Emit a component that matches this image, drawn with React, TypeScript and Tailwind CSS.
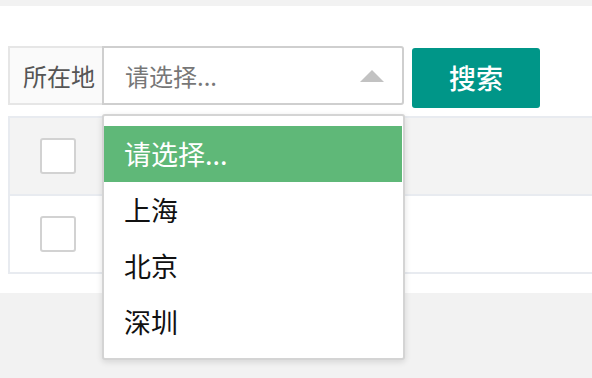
import React from "react";

const font = { fontFamily: '"Noto Sans CJK SC", "Noto Sans", sans-serif' };

export default function App() {
  const options = ["请选择...", "上海", "北京", "深圳"];
  return (
    <div className="w-[592px] h-[378px] bg-[#f2f2f2] overflow-hidden pt-[6px]" style={font}>
      <div className="bg-white h-[287px] pl-[8px] pt-[40px]">
        <div className="flex items-start h-[62px]">
          <div className="w-[94px] h-[59px] border-2 border-r-0 border-[#e6e6e6] bg-[#fafafa] flex items-center pl-[13px] text-[24px] text-[#555]">
            所在地
          </div>
          <div className="relative w-[302px] h-[59px] border-2 border-[#cfcfcf] rounded-r-[3px] flex items-center pl-[21px] text-[24px] text-[#777]">
            请选择...
            <div className="absolute right-[18px] top-[22px] w-0 h-0 border-l-[12px] border-r-[12px] border-b-[12px] border-l-transparent border-r-transparent border-b-[#c2c2c2]" />
            <div className="absolute left-[-2px] top-[66px] w-[303px] h-[246px] bg-white border-2 border-[#d4d4d4] rounded-[3px] shadow-[0_2px_6px_rgba(0,0,0,0.12)] pt-[10px] z-10">
              {options.map((o, i) => (
                <div
                  key={o}
                  className={
                    "h-[56px] flex items-center pl-[20px] text-[27px] mr-px " +
                    (i === 0 ? "bg-[#5fb878] text-white" : "text-[#111]")
                  }
                >
                  {o}
                </div>
              ))}
            </div>
          </div>
          <button className="ml-[8px] mt-[2px] w-[128px] h-[60px] bg-[#009688] rounded-[3px] text-white text-[27px] font-medium flex items-center justify-center">
            搜索
          </button>
        </div>
        <div className="mt-[8px] border-2 border-r-0 border-[#e8ebf0]">
          <div className="h-[78px] bg-[#f3f3f3] border-b-2 border-[#e8ebf0] flex items-center pl-[30px]">
            <div className="w-[36px] h-[36px] bg-white border-2 border-[#d2d2d2] rounded-[3px]" />
          </div>
          <div className="h-[76px] bg-white flex items-center pl-[30px]">
            <div className="w-[36px] h-[36px] bg-white border-2 border-[#d2d2d2] rounded-[3px]" />
          </div>
        </div>
      </div>
    </div>
  );
}
